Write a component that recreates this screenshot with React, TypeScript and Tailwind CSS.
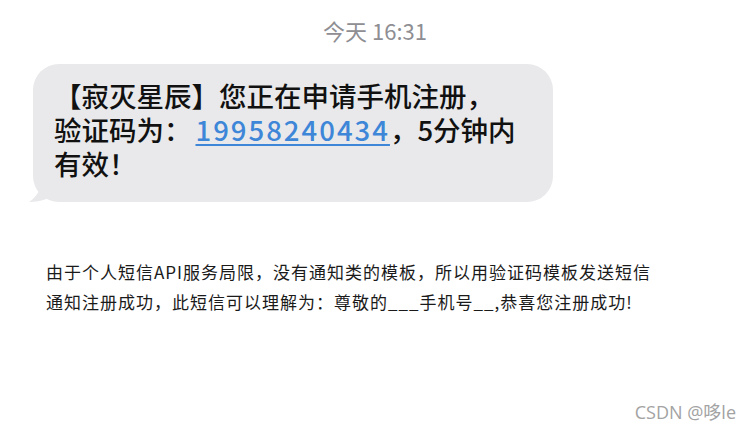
import React from "react";

const Bubble = () => {
  return (
    <div className="relative ml-[33px] mt-[19px] w-[520px] h-[138px] rounded-[26px] bg-[#e9e9eb] pl-[21px] pt-[14px]">
      <svg
        className="absolute left-[-13px] bottom-0"
        width="40"
        height="26"
        viewBox="0 0 40 26"
      >
        <path d="M22 0 C22 12 18 20 9 26 C22 26 32 22 40 14 L40 0 Z" fill="#e9e9eb" />
      </svg>
      <p className="relative text-[27.5px] leading-[34px] font-medium text-[#111] [font-family:'Noto_Sans_CJK_SC',sans-serif]">
        【寂灭星辰】您正在申请手机注册，
        <br />
        验证码为：
        <span className="text-[#3d86d8] underline decoration-2 underline-offset-[3px] tracking-[2px] ml-[4px]">19958240434</span>
        ，5分钟内
        <br />
        有效！
      </p>
    </div>
  );
};

export default function App() {
  return (
    <div className="relative w-[750px] h-[434px] bg-white overflow-hidden [font-family:'Noto_Sans_CJK_SC',sans-serif]">
      <div className="pt-[15px] text-center text-[22px] leading-[30px] text-[#8e8e93]">
        今天 16:31
      </div>
      <Bubble />
      <div className="ml-[46px] mt-[55px] text-[17px] leading-[30px] text-[#1a1a1a] tracking-[1px]">
        <p>由于个人短信API服务局限，没有通知类的模板，所以用验证码模板发送短信</p>
        <p>通知注册成功，此短信可以理解为：尊敬的___手机号__,恭喜您注册成功!</p>
      </div>
      <div className="absolute right-[14px] bottom-[8px] text-[18px] text-[#a3a3a3] [font-family:'Open_Sans','Noto_Sans_CJK_SC',sans-serif]">
        CSDN @哆le
      </div>
    </div>
  );
}
